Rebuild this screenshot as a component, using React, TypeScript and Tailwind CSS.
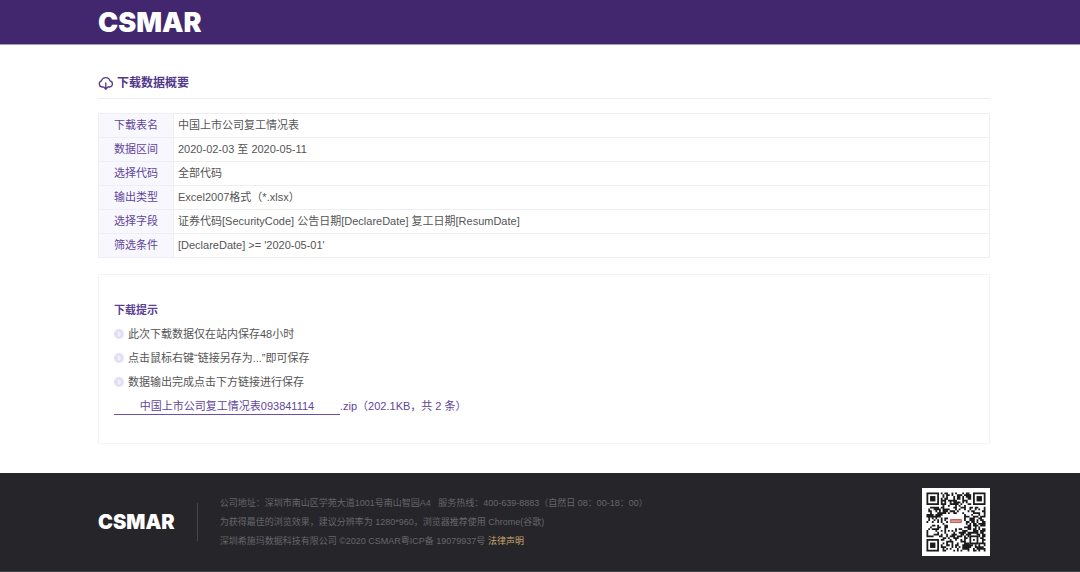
import type { ReactNode } from "react";

const summaryRows = [
  { label: "下载表名", value: "中国上市公司复工情况表" },
  { label: "数据区间", value: "2020-02-03 至 2020-05-11" },
  { label: "选择代码", value: "全部代码" },
  { label: "输出类型", value: "Excel2007格式（*.xlsx）" },
  { label: "选择字段", value: "证券代码[SecurityCode] 公告日期[DeclareDate] 复工日期[ResumDate]" },
  { label: "筛选条件", value: "[DeclareDate] >= '2020-05-01'" },
];

const tips = [
  "此次下载数据仅在站内保存48小时",
  "点击鼠标右键“链接另存为...”即可保存",
  "数据输出完成点击下方链接进行保存",
];

const QR_SIZE = 33;

function isFinderArea(x: number, y: number) {
  return (x < 8 && y < 8) || (x > QR_SIZE - 9 && y < 8) || (x < 8 && y > QR_SIZE - 9);
}

function isAlignmentArea(x: number, y: number) {
  return x > 23 && x < 29 && y > 23 && y < 29;
}

function isLogoArea(x: number, y: number) {
  return x > 11 && x < 21 && y > 11 && y < 20;
}

function buildModules() {
  let seed = 20200511;
  let d = "";
  for (let y = 0; y < QR_SIZE; y++) {
    for (let x = 0; x < QR_SIZE; x++) {
      seed = (seed * 48271) % 2147483647;
      const reserved = isFinderArea(x, y) || isAlignmentArea(x, y) || isLogoArea(x, y);
      if (seed / 2147483647 > 0.48 && !reserved) {
        d += `M${x} ${y}h1v1h-1z`;
      }
    }
  }
  return d;
}

const qrModules = buildModules();

function Finder({ x, y }: { x: number; y: number }) {
  return (
    <g>
      <rect x={x + 0.5} y={y + 0.5} width="6" height="6" fill="none" stroke="#1c1c1c" />
      <rect x={x + 2} y={y + 2} width="3" height="3" fill="#1c1c1c" />
    </g>
  );
}

function QrCode() {
  return (
    <svg aria-label="二维码" className="h-[68px] w-[68px] shrink-0 bg-white" role="img" viewBox="-2.5 -2.5 38 38">
      <path d={qrModules} fill="#1c1c1c" />
      <Finder x={0} y={0} />
      <Finder x={QR_SIZE - 7} y={0} />
      <Finder x={0} y={QR_SIZE - 7} />
      <rect x="24.5" y="24.5" width="4" height="4" fill="none" stroke="#1c1c1c" />
      <rect x="26" y="26" width="1" height="1" fill="#1c1c1c" />
      <rect x="13.2" y="14.8" width="6.6" height="2.3" rx="0.5" fill="#c4625c" />
      <path d="M14 16h5" stroke="#f3dcda" strokeDasharray="0.7 0.4" strokeWidth="0.7" />
    </svg>
  );
}

function CloudDownloadIcon() {
  return (
    <svg aria-hidden="true" className="h-4 w-4 shrink-0" fill="none" viewBox="0 0 16 16">
      <path
        d="M5.3 12H4A3.2 3.2 0 0 1 3.5 5.8A4.4 4.4 0 0 1 12 5.8A3.15 3.15 0 0 1 11.6 12H10.3"
        stroke="currentColor"
        strokeLinecap="round"
        strokeWidth="1.3"
      />
      <path d="M7.8 8V13.5M6 12.2L7.8 14.2L9.6 12.2" stroke="currentColor" strokeLinecap="round" strokeWidth="1.3" />
    </svg>
  );
}

function TipIcon() {
  return (
    <svg aria-hidden="true" className="h-[10px] w-[10px] shrink-0" viewBox="0 0 10 10">
      <circle cx="5" cy="5" fill="#e3e0f4" r="5" />
      <path d="M4.2 3L6.2 5L4.2 7" fill="none" stroke="#f6f5fc" strokeWidth="1.2" />
    </svg>
  );
}

function Container({ className, children }: { className: string; children: ReactNode }) {
  return <div className={`pl-[98px] pr-[90px] ${className}`}>{children}</div>;
}

export default function App() {
  return (
    <div
      className="bg-white font-['Liberation_Sans','Noto_Sans_CJK_SC',sans-serif] text-[11px] leading-6 text-[#555555]"
      lang="zh-CN"
    >
      <header className="border-b border-[#a99bc0] bg-[#42276f]">
        <Container className="flex h-11 items-center">
          <div className="font-['Inter',sans-serif] text-[27px] leading-none font-black text-white">CSMAR</div>
        </Container>
      </header>

      <main>
        <Container className="pt-[22px] pb-[29px]">
          <h1 className="flex h-8 items-center gap-[3px] border-b border-[#ededf1] text-xs font-bold text-[#54398c]">
            <CloudDownloadIcon />
            下载数据概要
          </h1>

          <table className="mt-[14px] w-full border-collapse">
            <tbody>
              {summaryRows.map((row) => (
                <tr key={row.label} className="h-6">
                  <th
                    className="w-[75px] border border-[#eeeef6] bg-[#f8f7fe] p-0 text-center leading-[23px] font-normal text-[#5f459b]"
                    scope="row"
                  >
                    {row.label}
                  </th>
                  <td className="border border-[#eeeef3] px-1 py-0 leading-[23px]">{row.value}</td>
                </tr>
              ))}
            </tbody>
          </table>

          <section className="mt-4 border border-[#f4f4f6] px-[15px] pt-[23px] pb-[25px]">
            <h2 className="font-bold text-[#5a3f97]">下载提示</h2>
            <ul>
              {tips.map((tip) => (
                <li key={tip} className="flex items-center gap-1">
                  <TipIcon />
                  {tip}
                </li>
              ))}
            </ul>
            <p className="flex items-center text-[#5f459b]">
              <a className="w-[226px] border-b border-[#6a4fb0] text-center leading-4" href="#download">
                中国上市公司复工情况表093841114
              </a>
              <span>.zip（202.1KB，共 2 条）</span>
            </p>
          </section>
        </Container>
      </main>

      <footer className="border-b border-[#3c3f46] bg-[#26252a]">
        <Container className="flex h-[98px] items-center">
          <div className="font-['Inter',sans-serif] text-[20px] leading-none font-black text-white">CSMAR</div>
          <div className="ml-[22px] h-[38px] border-l border-[#47464b]" />
          <div className="ml-[22px] flex-1 text-[9px] leading-[19px] text-[#66656a]">
            <p>公司地址：深圳市南山区学苑大道1001号南山智园A4 &nbsp; 服务热线：400-639-8883（自然日 08：00-18：00）</p>
            <p>为获得最佳的浏览效果，建议分辨率为 1280*960，浏览器推荐使用 Chrome(谷歌)</p>
            <p>
              深圳希施玛数据科技有限公司 ©2020 CSMAR粤ICP备 19079937号{" "}
              <a className="text-[#c5a56a]" href="#legal">
                法律声明
              </a>
            </p>
          </div>
          <QrCode />
        </Container>
      </footer>
    </div>
  );
}
